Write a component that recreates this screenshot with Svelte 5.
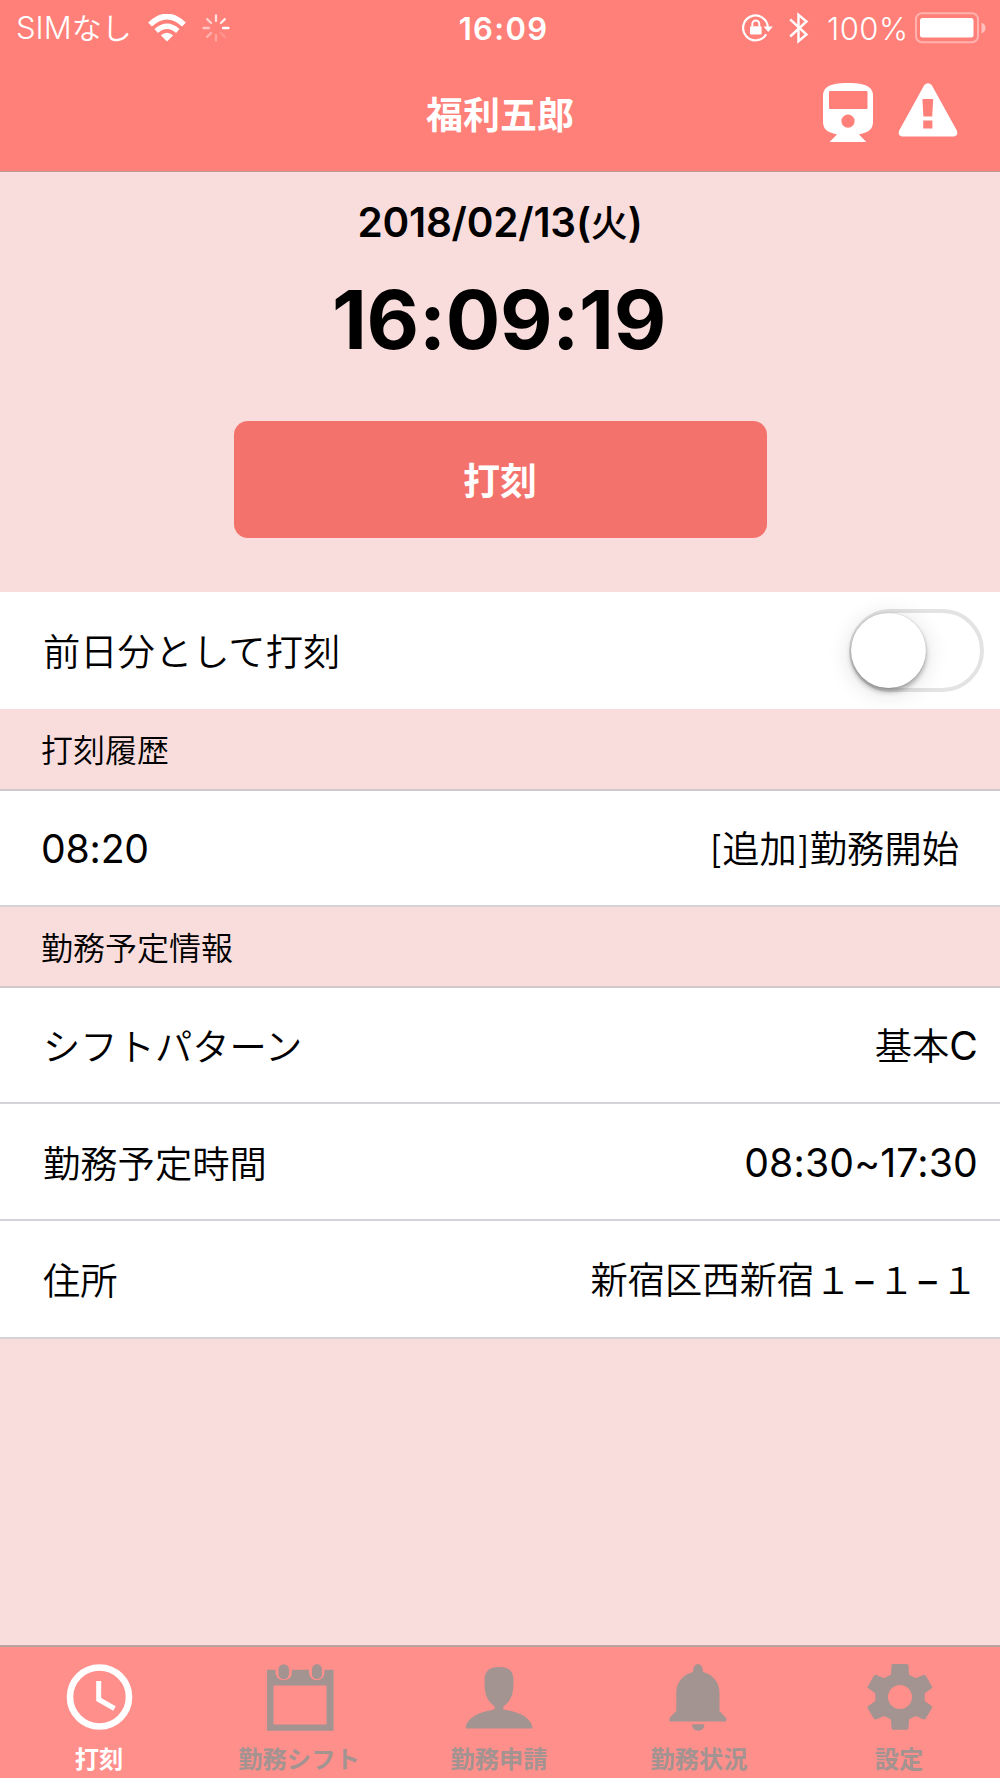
<script>
  const tabs = [
    { id: 'clock', label: '打刻', shift: 0.5, active: true },
    { id: 'calendar', label: '勤務シフト', shift: 0.5 },
    { id: 'person', label: '勤務申請', shift: 1 },
    { id: 'bell', label: '勤務状況', shift: 3.5 },
    { id: 'gear', label: '設定', shift: 0.5 }
  ];
  const rays = [1, 0.85, 0.75, 0.65, 0.55, 0.4, 0.28, 0.16];
</script>

<div class="screen">
  <header>
    <div class="status">
      <div class="carrier">
        <span class="sim">SIM<span class="kana">なし</span></span>
        <svg class="wifi" width="38" height="28" viewBox="0 0 38 28" fill="none" stroke="#fff">
          <path d="M2 10.500Q19-5.500 36 10.500" stroke-width="5.600" />
          <path d="M8.200 17Q19 7.500 29.800 17" stroke-width="5.200" />
          <path d="M19 27.500L12.800 21.300Q19 16.300 25.200 21.300Z" fill="#fff" stroke="none" />
        </svg>
        <svg class="spinner" width="28" height="28" viewBox="-14 -14 28 28" stroke="#fff" stroke-width="2.300" stroke-linecap="round">
          {#each rays as o, i}
            <path d="M7 0H12.500" opacity={o} transform={`rotate(${-45 * i})`} />
          {/each}
        </svg>
      </div>
      <div class="now">16:09</div>
      <div class="system">
        <svg class="lock" width="31" height="28" viewBox="0 0 31 28" fill="none" stroke="#fff">
          <path d="M25.900 13.500A12.400 12.400 0 1 0 24.200 20.200" stroke-width="2.200" />
          <path d="M21.500 12.500H31L26.200 18Z" fill="#fff" stroke="none" />
          <path d="M10.300 12.500V10A3.500 3.500 0 0 1 17.300 10V12.500" stroke-width="1.900" />
          <rect x="8" y="12.300" width="11.600" height="8.200" rx="1.200" fill="#fff" stroke="none" />
        </svg>
        <svg class="bt" width="20" height="32" viewBox="0 0 20 32" fill="none" stroke="#fff" stroke-width="2.400">
          <path d="M1.200 7.300L17.500 22.500L9.500 29.200V2.800L17.500 9.500L1.200 24.500" />
        </svg>
        <span class="percent">100%</span>
        <svg class="battery" width="71" height="32" viewBox="0 0 71 32">
          <rect x="1" y="1.200" width="62" height="29" rx="6" fill="none" stroke="#fff" stroke-opacity=".4" stroke-width="2" />
          <rect x="5" y="6" width="53.500" height="19.500" rx="2.500" fill="#fff" />
          <path d="M66.500 10.500Q70.500 12 70.500 16T66.500 21.500Z" fill="#fff" fill-opacity=".5" />
        </svg>
      </div>
    </div>
    <div class="navbar">
      <h1>福利五郎</h1>
      <div class="actions">
        <svg width="52" height="60" viewBox="0 .5 52 60" fill="#fff">
          <path fill-rule="evenodd" d="M13 1.500C20 .3 32 .3 39 1.500C47 3 51 7 51 13V39C51 47 47 49.500 37 52L44.300 59.500H7.500L15 52C5 49.500 1 47 1 39V13C1 7 5 3 13 1.500ZM8 8.500Q7 8.500 7 9.500V25.500Q7 26.500 8 26.500H44.500Q45.500 26.500 45.500 25.500V9.500Q45.500 8.500 44.500 8.500ZM26 32A6.600 6.600 0 1 0 26 45.200A6.600 6.600 0 1 0 26 32Z" />
        </svg>
        <svg width="60" height="54" viewBox="0 0 60 54" fill="#fff">
          <path fill-rule="evenodd" d="M26.300 2Q30-1.500 33.700 2L58.800 47.500Q60.800 52.500 56 53.500H4Q-.8 52.500 1.200 47.500ZM24.400 16L25.400 33.500H34.200L35.200 16ZM25.200 37.500V45.500H34.400V37.500Z" />
        </svg>
      </div>
    </div>
  </header>

  <section class="hero">
    <div class="date">2018/02/13(<span class="kanji">火</span>)</div>
    <div class="clock">16:09:19</div>
    <button>打刻</button>
  </section>

  <div class="row toggle-row">
    <span>前日分として打刻</span>
    <div class="switch"><div class="knob"></div></div>
  </div>

  <h2>打刻履歴</h2>
  <div class="row history">
    <span class="num stamp">08:20</span>
    <span><span class="bracket">[</span>追加<span class="bracket">]</span>勤務開始</span>
  </div>

  <h2 class="second">勤務予定情報</h2>
  <div class="row">
    <span>シフトパターン</span>
    <span>基本<span class="num">C</span></span>
  </div>
  <div class="row middle">
    <span>勤務予定時間</span>
    <span class="num hours">08:30~17:30</span>
  </div>
  <div class="row last">
    <span>住所</span>
    <span>新宿区西新宿１<span class="num">−</span>１<span class="num">−</span>１</span>
  </div>

  <nav>
    {#each tabs as tab}
      <div class="tab" class:active={tab.active}>
        <svg width="68" height="68" viewBox={`${tab.shift} 0 68 68`} fill="currentColor">
          {#if tab.id === 'clock'}
            <circle cx="34" cy="34" r="29.500" fill="none" stroke="currentColor" stroke-width="6.600" />
            <path d="M33.200 18V36.500L49 45.500" fill="none" stroke="currentColor" stroke-width="5" />
          {:else if tab.id === 'calendar'}
            <path fill-rule="evenodd" d="M1.500 6.700H10V9C10 20 26.500 20 26.500 9V6.700H43.500V9C43.500 20 59 20 59 9V6.700H68V67.700H1.500ZM8 22.500V61.500H61V22.500Z" />
            <rect x="13" y="1.200" width="10.500" height="15" rx="5.200" />
            <rect x="46.500" y="1.200" width="10" height="15" rx="5" />
          {:else if tab.id === 'person'}
            <path d="M34 4C44 4 48.500 8 48.500 18C48.500 30 47 37 38.500 43.500C37.500 45 38.500 46.500 41 47C56 49.500 67 56 67.500 65.500H.5C1 56 12 49.500 27 47C29.500 46.500 30.500 45 29.500 43.500C21 37 19.500 30 19.500 18C19.500 8 24 4 34 4Z" />
          {:else if tab.id === 'bell'}
            <path d="M35.500 1Q40.500 1.500 40.500 9C50.500 11.500 57 19.500 57 29.500V48L63.700 55V58.500H7V55L13.800 48V29.500C13.800 19.500 20.500 11.500 30.500 9Q30.500 1.500 35.500 1Z" />
            <path d="M29.300 61.300H42Q41.500 67.700 35.700 67.700T29.300 61.300Z" />
          {:else}
            <path fill-rule="evenodd" d="M27 1H41.500L43 2.300L43.500 11.500L50 15.200L58.500 11.700L60.200 12.500L66.800 24L66.500 25.300L59.200 30.300V38L66.800 43.500L66.500 45L60 56L58.500 56.500L50 53L43.500 56.500L43 65.500L41.500 66.700H27L26 65.500L25.500 56.500L18.500 53L10.500 56.500L8.500 56L2 45L2.300 43.300L9.800 38V30.300L2.300 25L2 24L8.500 12.500L10.500 11.700L18.500 15.200L25.500 11.500L26 2.300ZM34.500 22A12 12 0 1 0 34.500 46A12 12 0 1 0 34.500 22Z" />
          {/if}
        </svg>
        <span>{tab.label}</span>
      </div>
    {/each}
  </nav>
</div>

<style>
  :global(body) {
    margin: 0;
  }
  .screen {
    width: 1000px;
    height: 1778px;
    display: flex;
    flex-direction: column;
    background: #f9dddd;
    color: #000;
    font-family: 'Noto Sans CJK JP', sans-serif;
    overflow: hidden;
  }
  svg {
    display: block;
    flex: none;
  }
  header {
    height: 171px;
    flex: none;
    background: #ff7f79;
    border-bottom: 1px solid #b99b99;
    color: #fff;
  }
  .status {
    height: 55px;
    display: grid;
    grid-template-columns: 1fr auto 1fr;
    align-items: center;
    font: 31px/55px Inter, 'Noto Sans CJK JP', sans-serif;
  }
  .carrier,
  .system {
    display: flex;
    align-items: center;
  }
  .carrier {
    padding-left: 16px;
  }
  .system {
    justify-content: flex-end;
    padding-right: 14px;
  }
  .sim {
    width: 132px;
    font-weight: 350;
    white-space: nowrap;
  }
  .kana {
    font-size: 30px;
  }
  .spinner {
    margin-left: 16px;
  }
  .now {
    width: 90px;
    padding-left: 7px;
    text-align: center;
    font-weight: 600;
    letter-spacing: 1.3px;
    white-space: nowrap;
  }
  .bt {
    margin-left: 16px;
  }
  .percent {
    width: 80px;
    margin: 0 8px 0 18px;
    font-weight: 350;
    letter-spacing: 0.5px;
    white-space: nowrap;
  }
  .navbar {
    height: 116px;
    display: grid;
    grid-template-columns: 1fr auto 1fr;
    align-items: center;
  }
  h1 {
    grid-column: 2;
    margin: 0;
    font-size: 37px;
    line-height: 116px;
    font-weight: 600;
  }
  .actions {
    display: flex;
    justify-content: flex-end;
    align-items: flex-start;
    gap: 24px;
    padding-right: 42px;
  }
  .hero {
    height: 420px;
    flex: none;
    display: flex;
    flex-direction: column;
    align-items: center;
    font-family: Inter, 'Noto Sans CJK JP', sans-serif;
  }
  .date {
    margin-top: 26px;
    height: 50px;
    font-size: 40.500px;
    line-height: 50px;
    font-weight: 600;
    letter-spacing: -0.200px;
  }
  .kanji {
    font-size: 37px;
    font-weight: 500;
  }
  .clock {
    margin-top: 22px;
    height: 100px;
    padding-right: 2px;
    font-size: 81px;
    line-height: 100px;
    font-weight: 700;
    letter-spacing: -0.300px;
  }
  button {
    width: 533px;
    height: 117px;
    margin-top: 51px;
    padding: 0;
    border: 0;
    border-radius: 14px;
    background: #f4726c;
    color: #fff;
    font: 700 37px/117px 'Noto Sans CJK JP', sans-serif;
  }
  .row {
    height: 114px;
    flex: none;
    display: flex;
    justify-content: space-between;
    align-items: center;
    padding: 0 22px 0 43px;
    background: #fff;
    border-bottom: 2px solid #d5d3d8;
    font-size: 37.300px;
    line-height: 60px;
    font-weight: 350;
    white-space: nowrap;
  }
  .toggle-row {
    height: 115px;
    padding: 0 16px 2px 43px;
    border-bottom: 0;
  }
  .history {
    padding: 0 41px 0 41px;
  }
  .middle {
    height: 115px;
  }
  .last {
    height: 116px;
  }
  .num {
    font-family: Inter, sans-serif;
    font-size: 39.200px;
    font-weight: 400;
  }
  .stamp {
    padding-top: 2px;
    letter-spacing: -0.200px;
  }
  .hours {
    padding-top: 2px;
    letter-spacing: 0.150px;
  }
  .bracket {
    font-family: Inter, sans-serif;
    font-size: 37px;
    font-weight: 350;
  }
  .switch {
    box-sizing: border-box;
    width: 135px;
    height: 83px;
    margin-top: 2px;
    border: 4px solid #e3e3e3;
    border-radius: 42px;
  }
  .knob {
    width: 75px;
    height: 75px;
    margin-left: -2px;
    border-radius: 50%;
    background: #fff;
    box-shadow: 0 4px 5px rgba(0, 0, 0, 0.28), 0 4px 24px rgba(0, 0, 0, 0.14), 0 0 2px rgba(0, 0, 0, 0.2);
  }
  h2 {
    margin: 0;
    height: 80px;
    flex: none;
    padding-left: 41px;
    border-bottom: 2px solid #cfc8cd;
    font-size: 32px;
    line-height: 79px;
    font-weight: 350;
  }
  .second {
    height: 79px;
  }
  nav {
    height: 131px;
    margin-top: auto;
    flex: none;
    display: grid;
    grid-template-columns: repeat(5, 1fr);
    background: #ff8f8b;
    border-top: 2px solid #b9a3a2;
    color: #a39391;
  }
  .tab {
    display: flex;
    flex-direction: column;
    align-items: center;
    padding-top: 16px;
    font-size: 24.300px;
    line-height: 36px;
    font-weight: 700;
  }
  .tab span {
    margin: 9px 2px 0 0;
  }
  .active {
    color: #fff;
  }
</style>
